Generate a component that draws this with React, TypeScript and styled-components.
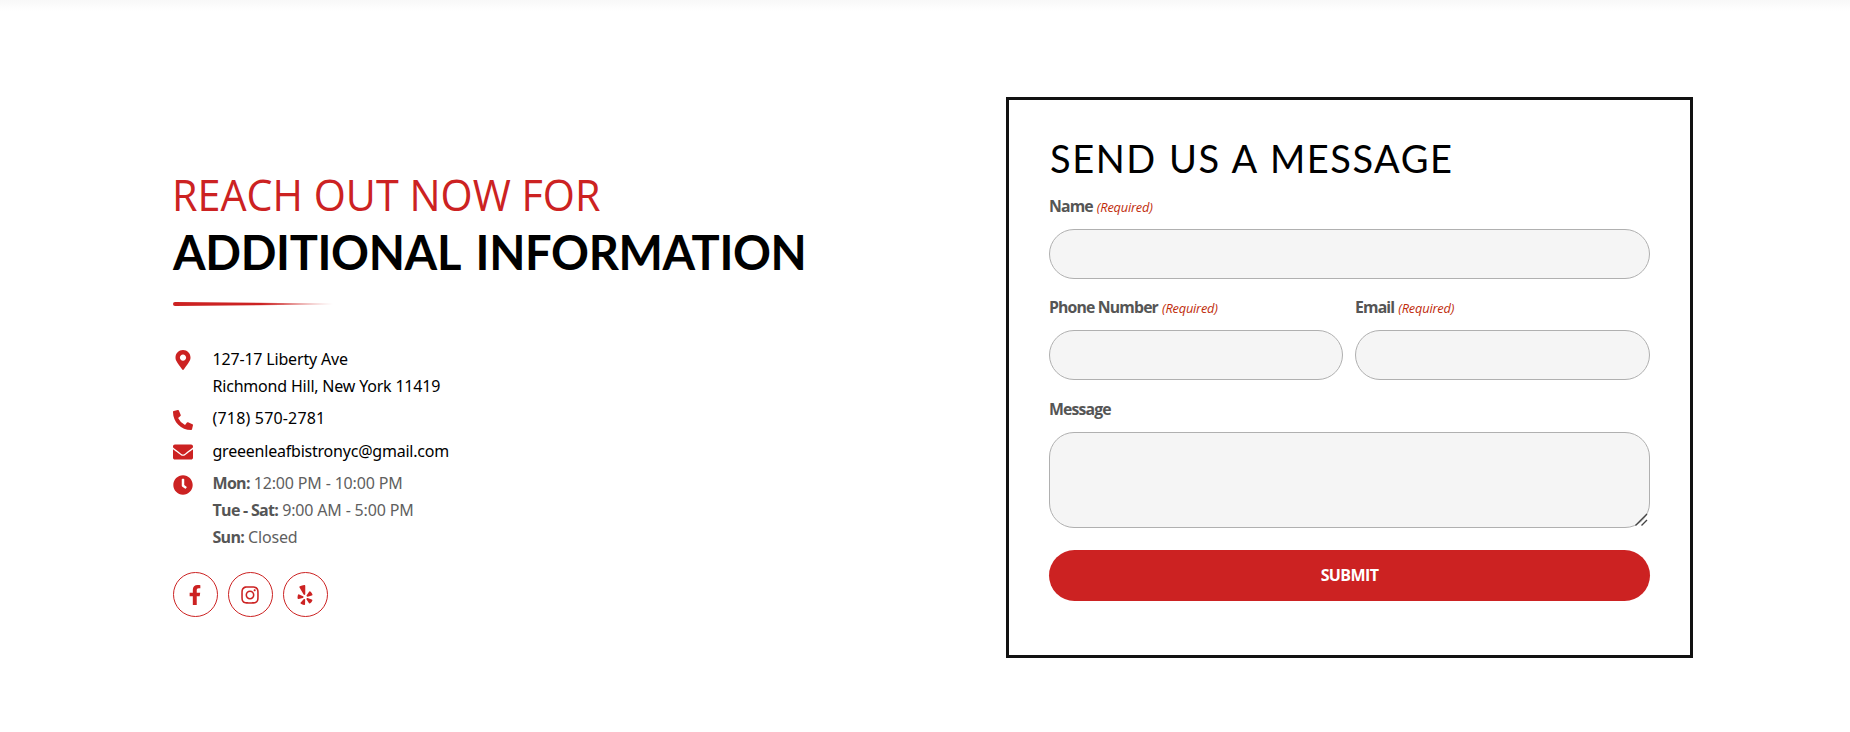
import React from "react";
import styled, { createGlobalStyle } from "styled-components";
import { FaMapMarkerAlt, FaPhoneAlt, FaEnvelope, FaClock, FaFacebookF, FaInstagram, FaYelp } from "react-icons/fa";

const RED = "#cc2222";

const GlobalStyle = createGlobalStyle`
  * { box-sizing: border-box; }
  body {
    margin: 0;
    background: #fff;
    font-family: "Noto Sans", "Open Sans", sans-serif;
    font-size: 16px;
    line-height: 27px;
    color: #000;
  }
`;

const Page = styled.main`
  display: flex;
  justify-content: space-between;
  align-items: flex-start;
  height: 732px;
  padding: 97px 157px 0 173px;
  background: linear-gradient(#f8f8f8, #fff 11px);
`;

const Info = styled.section`
  display: flex;
  flex-direction: column;
  width: 680px;
  padding-top: 68.4px;
`;

const Heading = styled.h2`
  display: flex;
  flex-direction: column;
  margin: 0;
  line-height: 57px;
  white-space: nowrap;
`;

const HeadingLead = styled.span`
  margin-left: -1px;
  color: ${RED};
  font-family: "Open Sans", sans-serif;
  font-size: 44.5px;
  font-weight: 400;
  transform: scaleX(0.928);
  transform-origin: left;
`;

const HeadingMain = styled.span`
  padding-top: 1.5px;
  font-family: Lato, sans-serif;
  font-size: 47px;
  font-weight: 700;
  letter-spacing: -0.35px;
  word-spacing: 5px;
`;

const Taper = styled.svg`
  display: block;
  width: 160px;
  height: 4px;
  margin: 21.1px 0 39.7px;
`;

const ContactList = styled.ul`
  display: flex;
  flex-direction: column;
  gap: 5.5px;
  margin: 0;
  padding: 0;
  list-style: none;
`;

const ContactRow = styled.li<{ $muted?: boolean }>`
  display: grid;
  grid-template-columns: 19px 1fr;
  column-gap: 20.5px;
  color: ${(p) => (p.$muted ? "#5f5f5f" : "#000")};
`;

const IconCell = styled.span`
  display: flex;
  justify-content: center;
  align-items: center;
  height: 27px;
  padding-top: 2px;
  color: ${RED};
  svg { flex: none; }
`;

const Lines = styled.div`
  display: flex;
  flex-direction: column;
`;

const Line = styled.span<{ $track: number }>`
  letter-spacing: ${(p) => p.$track}px;
  white-space: nowrap;
`;

const Day = styled.b`
  color: #555;
  font-family: "Open Sans", sans-serif;
  letter-spacing: -0.7px;
`;

const Socials = styled.div`
  display: flex;
  gap: 10px;
  margin-top: 20.4px;
`;

const SocialLink = styled.a`
  display: flex;
  align-items: center;
  justify-content: center;
  width: 45px;
  height: 45px;
  padding: 1px 1px 0 0;
  border: 1px solid ${RED};
  border-radius: 50%;
  color: ${RED};
`;

const Card = styled.form`
  display: flex;
  flex-direction: column;
  width: 687px;
  height: 561px;
  padding: 35px 40px;
  border: 3px solid #111;
  background: #fff;
`;

const CardTitle = styled.h3`
  margin: 0 0 11.8px 1px;
  font: 400 38px/46px Lato, sans-serif;
  letter-spacing: 1.55px;
  word-spacing: 1px;
  white-space: nowrap;
`;

const Fields = styled.div`
  display: grid;
  grid-template-columns: 294px 1fr;
  column-gap: 12px;
  row-gap: 15.65px;
`;

const Field = styled.label<{ $wide?: boolean }>`
  position: relative;
  display: flex;
  flex-direction: column;
  grid-column: ${(p) => (p.$wide ? "1 / -1" : "auto")};
`;

const Caption = styled.span`
  height: 36px;
  color: #555;
  font-family: "Open Sans", sans-serif;
  font-size: 15.8px;
  font-weight: 700;
  letter-spacing: -0.85px;
  white-space: nowrap;
`;

const Required = styled.i`
  margin-left: 4px;
  color: #c02b0a;
  font-size: 12.8px;
  font-weight: 400;
  letter-spacing: -0.2px;
`;

const Input = styled.input`
  width: 100%;
  height: 50px;
  padding: 0 20px;
  border: 1px solid #b0b0b0;
  border-radius: 25px;
  background: #f5f5f5;
`;

const Message = styled.textarea`
  display: block;
  width: 100%;
  height: 96px;
  padding: 12px 20px;
  border: 1px solid #b0b0b0;
  border-radius: 25px;
  background: #f5f5f5;
  resize: none;
`;

const Grip = styled.svg`
  position: absolute;
  right: 2px;
  bottom: 2px;
  width: 13px;
  height: 13px;
  stroke: #444;
  stroke-width: 1.4;
`;

const Submit = styled.button`
  height: 51px;
  margin-top: 21.9px;
  padding: 0;
  border: 0;
  border-radius: 26px;
  background: ${RED};
  color: #fff;
  font: 700 16px/51px "Open Sans", sans-serif;
  letter-spacing: -0.6px;
`;

const hours: [string, string][] = [
  ["Mon:", "12:00 PM - 10:00 PM"],
  ["Tue - Sat:", "9:00 AM - 5:00 PM"],
  ["Sun:", "Closed"],
];

export default function App() {
  return (
    <>
      <GlobalStyle />
      <Page>
        <Info>
          <Heading>
            <HeadingLead>REACH OUT NOW FOR</HeadingLead>
            <HeadingMain>ADDITIONAL INFORMATION</HeadingMain>
          </Heading>
          <Taper viewBox="0 0 160 4">
            <defs>
              <linearGradient id="taper">
                <stop offset="0" stopColor={RED} />
                <stop offset="0.55" stopColor={RED} />
                <stop offset="1" stopColor={RED} stopOpacity="0" />
              </linearGradient>
            </defs>
            <path d="M2 0L160 1.4V2.6L2 4Q0 4 0 2Q0 0 2 0Z" fill="url(#taper)" />
          </Taper>
          <ContactList>
            <ContactRow>
              <IconCell><FaMapMarkerAlt size={20} /></IconCell>
              <Lines>
                <Line $track={-0.18}>127-17 Liberty Ave</Line>
                <Line $track={-0.2}>Richmond Hill, New York 11419</Line>
              </Lines>
            </ContactRow>
            <ContactRow>
              <IconCell><FaPhoneAlt size={20} /></IconCell>
              <Line $track={0.18}>(718) 570-2781</Line>
            </ContactRow>
            <ContactRow>
              <IconCell><FaEnvelope size={20} /></IconCell>
              <Line $track={-0.22}>greeenleafbistronyc@gmail.com</Line>
            </ContactRow>
            <ContactRow $muted>
              <IconCell><FaClock size={20} /></IconCell>
              <Lines>
                {hours.map(([day, time]) => (
                  <Line key={day} $track={-0.17}><Day>{day}</Day> {time}</Line>
                ))}
              </Lines>
            </ContactRow>
          </ContactList>
          <Socials>
            <SocialLink><FaFacebookF size={20} /></SocialLink>
            <SocialLink><FaInstagram size={20} /></SocialLink>
            <SocialLink><FaYelp size={20} /></SocialLink>
          </Socials>
        </Info>
        <Card>
          <CardTitle>SEND US A MESSAGE</CardTitle>
          <Fields>
            <Field $wide>
              <Caption>Name<Required>(Required)</Required></Caption>
              <Input type="text" />
            </Field>
            <Field>
              <Caption>Phone Number<Required>(Required)</Required></Caption>
              <Input type="tel" />
            </Field>
            <Field>
              <Caption>Email<Required>(Required)</Required></Caption>
              <Input type="email" />
            </Field>
            <Field $wide>
              <Caption>Message</Caption>
              <Message />
              <Grip viewBox="0 0 13 13">
                <path d="M0.5 12.5L12 1M6.5 12.5L12 7" />
              </Grip>
            </Field>
          </Fields>
          <Submit type="button">SUBMIT</Submit>
        </Card>
      </Page>
    </>
  );
}
